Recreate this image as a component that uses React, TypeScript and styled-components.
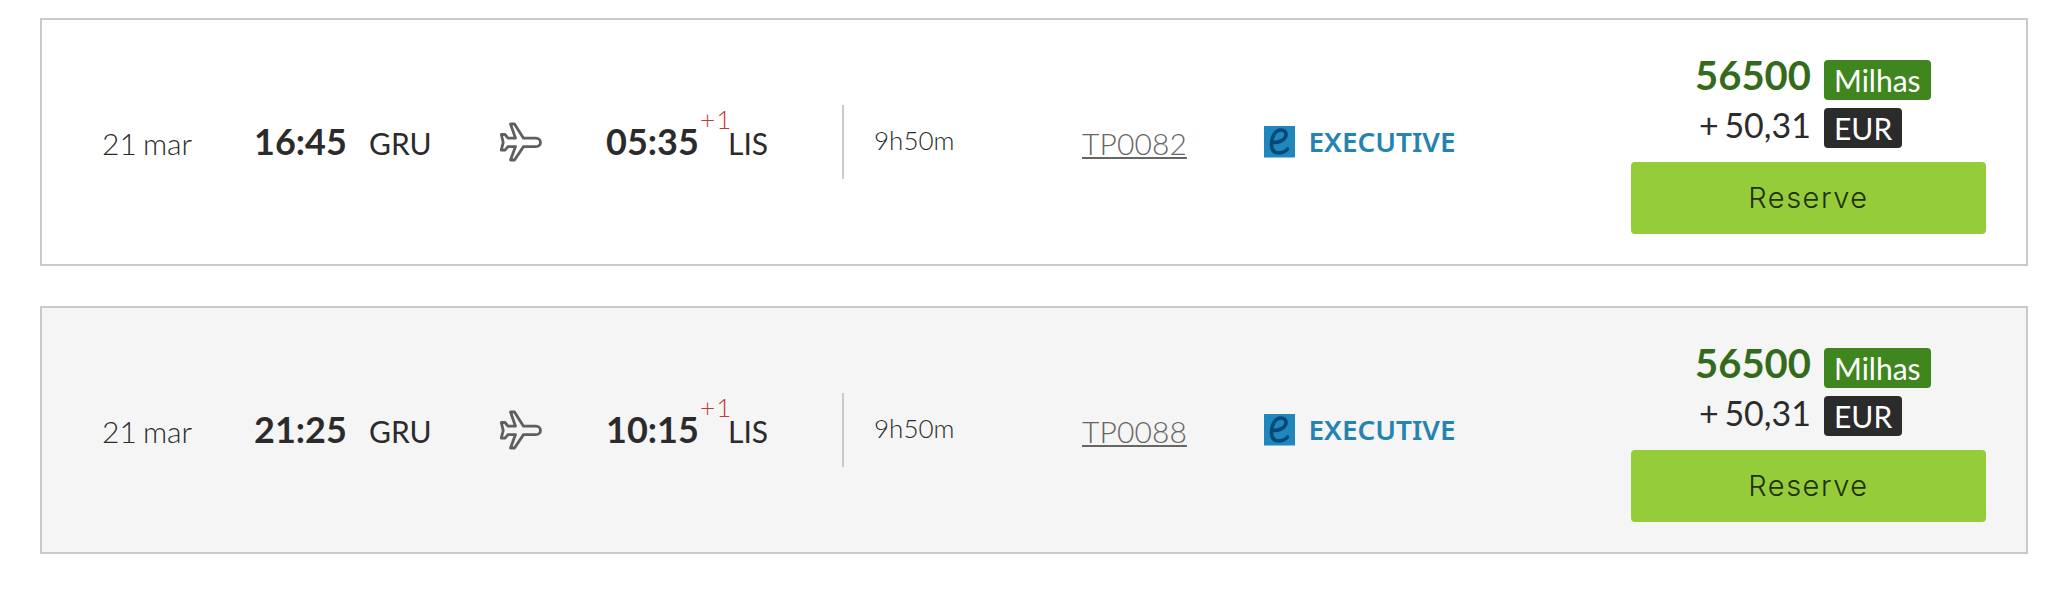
import React from "react";
import styled, { createGlobalStyle } from "styled-components";

const GlobalStyle = createGlobalStyle`
  * { box-sizing: border-box; }
  body {
    margin: 0;
    background: #fff;
    color: #2b2b2b;
    font-family: Lato, "Liberation Sans", sans-serif;
  }
`;

const FlightList = styled.main`
  display: flex;
  flex-direction: column;
  gap: 40px;
  padding: 18px 42px 42px 40px;
`;

const FlightCard = styled.article<{ $shaded: boolean }>`
  display: flex;
  justify-content: space-between;
  height: 248px;
  padding: 0 40px 0 60px;
  border: 2px solid #cacaca;
  background: ${(p) => (p.$shaded ? "#f5f5f5" : "#fff")};
`;

const Itinerary = styled.div`
  display: grid;
  grid-template-columns: 152px 115px 131px 106px 94px 28px 114px 32px 208px 182px auto;
  align-items: baseline;
  align-content: start;
  padding-top: 101px;
  line-height: 40px;
  white-space: nowrap;
`;

const DateText = styled.span`
  font-size: 30px;
  font-weight: 300;
  word-spacing: -2px;
`;

const Time = styled.span`
  font-size: 36px;
  font-weight: 700;
`;

const Airport = styled.span`
  font-size: 30px;
`;

const NextDay = styled.sup`
  align-self: start;
  margin-top: -22px;
  font-size: 26px;
  font-weight: 300;
  line-height: 40px;
  letter-spacing: 1.2px;
  color: #c0393b;
`;

const PlaneIcon = styled.svg`
  align-self: start;
  width: 44px;
  height: 40px;
  margin: 1px 0 0 -1px;
`;

const Divider = styled.span`
  align-self: start;
  width: 2px;
  height: 74px;
  margin: -16px 0 -18px;
  background: #c9c9c9;
`;

const Duration = styled.span`
  align-self: start;
  margin-top: -1px;
  font-size: 26px;
  font-weight: 300;
`;

const FlightLink = styled.a`
  font-size: 30px;
  font-weight: 300;
  letter-spacing: 0.1px;
  color: #666;
  text-decoration: underline;
  text-decoration-thickness: 2px;
  text-underline-offset: 2px;
  text-decoration-skip-ink: none;
`;

const CabinLogo = styled.svg`
  align-self: start;
  width: 194px;
  height: 40px;
  margin-top: 1px;
  overflow: visible;
`;

const Fare = styled.div`
  display: flex;
  flex-direction: column;
  width: 355px;
  padding-top: 40px;
`;

const PriceRow = styled.div`
  display: grid;
  grid-template-columns: 180px auto;
  column-gap: 13px;
  justify-content: start;
  align-items: start;
  height: 48px;
`;

const Miles = styled.strong`
  font-size: 40px;
  font-weight: 700;
  line-height: 40px;
  margin-top: -5px;
  text-align: right;
  color: #346b1b;
`;

const Cash = styled.span`
  font-size: 34px;
  line-height: 40px;
  margin-top: -3px;
  text-align: right;
  word-spacing: -3px;
`;

const Unit = styled.span<{ $tone: string }>`
  height: 40px;
  padding: 0 10px;
  border-radius: 4px;
  background: ${(p) => p.$tone};
  color: #fff;
  font-size: 30px;
  line-height: 41px;
`;

const ReserveButton = styled.button`
  height: 72px;
  margin-top: 6px;
  padding: 0 0 2px;
  border: 0;
  border-radius: 4px;
  background: #95cd3a;
  color: #1f300c;
  font-family: Inter, "Liberation Sans", sans-serif;
  font-size: 29px;
  font-weight: 300;
  letter-spacing: 1.5px;
`;

type Flight = {
  date: string;
  departs: string;
  from: string;
  arrives: string;
  to: string;
  duration: string;
  number: string;
};

const flights: Flight[] = [
  { date: "21 mar", departs: "16:45", from: "GRU", arrives: "05:35", to: "LIS", duration: "9h50m", number: "TP0082" },
  { date: "21 mar", departs: "21:25", from: "GRU", arrives: "10:15", to: "LIS", duration: "9h50m", number: "TP0088" },
];

const Plane = () => (
  <PlaneIcon viewBox="0 0 44 40" fill="none" stroke="#5f5f5f" strokeWidth="2.8" strokeLinejoin="round">
    <path d="M11.5 2H15.5L24.5 16.2H36.8C43 16.2 43 24.6 36.8 24.6H24.5L15.5 38H11.5L16.5 24.6H9L6 28.2H2.3L4.2 20.4L2.3 12.5H6L9 16.2H16.5Z" />
  </PlaneIcon>
);

const ExecutiveCabin = () => (
  <CabinLogo viewBox="0 -4 194 40">
    <rect width="31" height="31.5" fill="#2087bd" />
    <path
      d="M8 16.5C15 17 22 13.5 22 8.5C22 5.5 20 4 17 4C11 4 7.5 11 7.5 18C7.5 24 10 27 14.5 27C18.5 27 21.5 25.5 23.5 23"
      fill="none"
      stroke="#06477a"
      strokeWidth="3.6"
      strokeLinecap="round"
    />
    <text
      x="44.5"
      y="25.5"
      fill="#2583b2"
      fontFamily='"Noto Sans", sans-serif'
      fontSize="27.5"
      fontWeight="600"
      textLength="147"
      lengthAdjust="spacingAndGlyphs"
    >
      EXECUTIVE
    </text>
  </CabinLogo>
);

const FlightRow = ({ flight, shaded }: { flight: Flight; shaded: boolean }) => (
  <FlightCard $shaded={shaded}>
    <Itinerary>
      <DateText>{flight.date}</DateText>
      <Time>{flight.departs}</Time>
      <Airport>{flight.from}</Airport>
      <Plane />
      <Time>{flight.arrives}</Time>
      <NextDay>+1</NextDay>
      <Airport>{flight.to}</Airport>
      <Divider />
      <Duration>{flight.duration}</Duration>
      <FlightLink>{flight.number}</FlightLink>
      <ExecutiveCabin />
    </Itinerary>
    <Fare>
      <PriceRow>
        <Miles>56500</Miles>
        <Unit $tone="#40861f">Milhas</Unit>
      </PriceRow>
      <PriceRow>
        <Cash>+ 50,31</Cash>
        <Unit $tone="#2b2b2b">EUR</Unit>
      </PriceRow>
      <ReserveButton type="button">Reserve</ReserveButton>
    </Fare>
  </FlightCard>
);

export default function App() {
  return (
    <>
      <GlobalStyle />
      <FlightList>
        {flights.map((flight, i) => (
          <FlightRow key={flight.number} flight={flight} shaded={i % 2 === 1} />
        ))}
      </FlightList>
    </>
  );
}
